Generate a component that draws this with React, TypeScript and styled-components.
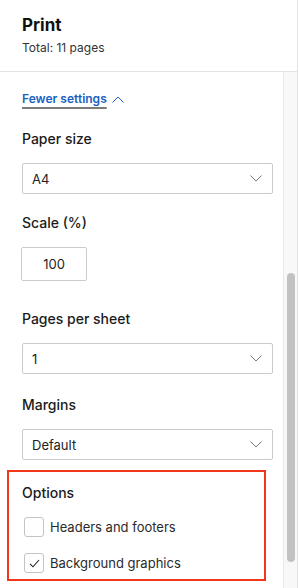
import styled, { createGlobalStyle } from "styled-components";

const GlobalStyle = createGlobalStyle`
  html, body {
    margin: 0;
    padding: 0;
    background: #ffffff;
  }
  body {
    font-family: Inter, "Liberation Sans", Arial, sans-serif;
    color: #1b1b1b;
  }
`;

const Panel = styled.div`
  width: 298px;
  height: 588px;
  box-sizing: border-box;
  border-right: 1px solid #e4e4e4;
  display: flex;
  flex-direction: column;
  overflow: hidden;
`;

const Header = styled.header`
  height: 72px;
  box-sizing: border-box;
  padding: 13px 22px 0;
  border-bottom: 1px solid #e3e3e3;
`;

const Title = styled.h1`
  margin: 0;
  font-size: 17px;
  line-height: 24px;
  font-weight: 700;
  color: #111;
`;

const Subtitle = styled.div`
  margin-top: 3px;
  font-size: 12px;
  line-height: 16px;
  color: #333;
`;

const Body = styled.div`
  flex: 1;
  display: flex;
  min-height: 0;
`;

const Content = styled.div`
  flex: 1;
  padding: 18px 10px 0 22px;
  display: flex;
  flex-direction: column;
`;

const Track = styled.div`
  width: 14px;
  box-sizing: border-box;
  border-left: 1px solid #e8e8e8;
  background: #f8f8f8;
  padding: 201px 0 0 3px;
`;

const Thumb = styled.div`
  width: 8px;
  height: 289px;
  border-radius: 4px;
  background: #c2c2c2;
`;

const ToggleLink = styled.a`
  display: flex;
  align-items: center;
  gap: 5px;
  font-size: 12px;
  line-height: 18px;
  font-weight: 600;
  color: #1a5fc2;
  cursor: pointer;

  span {
    text-decoration: underline;
    text-decoration-color: #7c7c7c;
    text-decoration-thickness: 2px;
    text-underline-offset: 4px;
  }
`;

const Field = styled.div<{ $top: number }>`
  margin-top: ${(p) => p.$top}px;
  display: flex;
  flex-direction: column;
  align-items: flex-start;
  gap: 15px;
`;

const Label = styled.div`
  font-size: 14px;
  line-height: 18px;
  font-weight: 500;
  color: #1b1b1b;
`;

const Select = styled.div`
  width: 100%;
  height: 31px;
  box-sizing: border-box;
  border: 1px solid #cbcbcb;
  border-radius: 2px;
  padding: 0 10px 0 9px;
  display: flex;
  align-items: center;
  justify-content: space-between;
  font-size: 13px;
  color: #222;
`;

const NumberBox = styled.div`
  width: 66px;
  height: 34px;
  margin-left: -1px;
  box-sizing: border-box;
  border: 1px solid #cbcbcb;
  border-radius: 2px;
  display: flex;
  align-items: center;
  justify-content: center;
  font-size: 13px;
  color: #222;
`;

const Highlight = styled.section`
  margin: 10px 0 0 -15px;
  width: 259px;
  box-sizing: border-box;
  border: 2px solid #f2361a;
  padding: 12px 0 6px 13px;
  display: flex;
  flex-direction: column;
`;

const CheckRow = styled.label<{ $top: number }>`
  margin-top: ${(p) => p.$top}px;
  display: flex;
  align-items: center;
  gap: 6px;
  padding-left: 2px;
  font-size: 13px;
  line-height: 20px;
  color: #2a2a2a;
`;

const Box = styled.span`
  width: 20px;
  height: 20px;
  box-sizing: border-box;
  border: 1px solid #c4c4c4;
  border-radius: 3px;
  display: flex;
  align-items: center;
  justify-content: center;
`;

const Chevron = ({ up, color }: { up?: boolean; color: string }) => (
  <svg width="12" height="7" viewBox="0 0 12 7" fill="none">
    <path
      d={up ? "M0.5 6.5 L6 1 L11.5 6.5" : "M0.5 0.5 L6 6 L11.5 0.5"}
      stroke={color}
      strokeWidth="1"
    />
  </svg>
);

function Dropdown({ value }: { value: string }) {
  return (
    <Select>
      <span>{value}</span>
      <Chevron color="#777" />
    </Select>
  );
}

function Check({ checked, label, top }: { checked?: boolean; label: string; top: number }) {
  return (
    <CheckRow $top={top}>
      <Box>
        {checked && (
          <svg width="11" height="9" viewBox="0 0 11 9" fill="none">
            <path d="M1 4.8 L4 7.8 L10 1" stroke="#222" strokeWidth="1.1" />
          </svg>
        )}
      </Box>
      {label}
    </CheckRow>
  );
}

export default function App() {
  return (
    <>
      <GlobalStyle />
      <Panel>
        <Header>
          <Title>Print</Title>
          <Subtitle>Total: 11 pages</Subtitle>
        </Header>
        <Body>
          <Content>
            <ToggleLink>
              <span>Fewer settings</span>
              <Chevron up color="#1a5fc2" />
            </ToggleLink>

            <Field $top={22}>
              <Label>Paper size</Label>
              <Dropdown value="A4" />
            </Field>

            <Field $top={20}>
              <Label>Scale (%)</Label>
              <NumberBox>100</NumberBox>
            </Field>

            <Field $top={29}>
              <Label>Pages per sheet</Label>
              <Dropdown value="1" />
            </Field>

            <Field $top={22}>
              <Label>Margins</Label>
              <Dropdown value="Default" />
            </Field>

            <Highlight>
              <Label>Options</Label>
              <Check top={15} label="Headers and footers" />
              <Check top={16} checked label="Background graphics" />
            </Highlight>
          </Content>
          <Track>
            <Thumb />
          </Track>
        </Body>
      </Panel>
    </>
  );
}
